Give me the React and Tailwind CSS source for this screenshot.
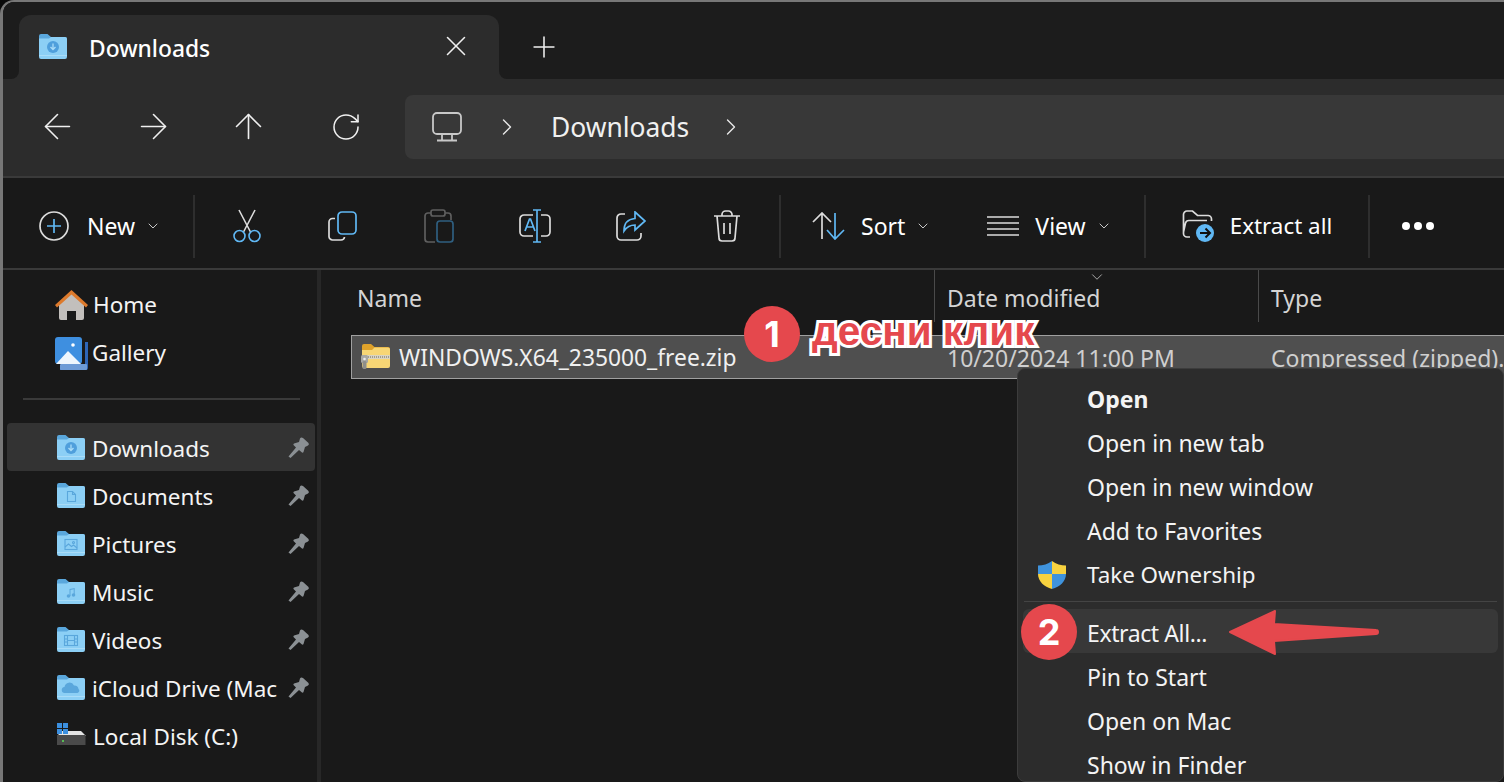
import React from 'react';
import { X, Plus, ArrowLeft, ArrowRight, ArrowUp, RotateCw, ChevronRight, ChevronDown } from 'lucide-react';

const BLUE = '#60b8f4';
const GREY = '#dcdcdc';

const FolderIcon = ({ glyph, className = '' }) => (
  <svg width="28" height="25" viewBox="0 0 28 25" className={`shrink-0 ${className}`}>
    <path d="M0 2a2 2 0 0 1 2-2h6.500l3.500 3h14a2 2 0 0 1 2 2v3H0z" fill="#5aa7dc" />
    <path d="M0 4.500h10l2-1.500h14a2 2 0 0 1 2 2v18a2 2 0 0 1-2 2H2a2 2 0 0 1-2-2z" fill="#8ccff5" />
    <rect x="0" y="21" width="28" height="1" fill="#a9dcf8" />
    {glyph === 'down' && (
      <g>
        <circle cx="14" cy="13" r="6" fill="#4f9fdc" />
        <path d="M14 9.500v6M11.500 13l2.500 2.500 2.500-2.500" stroke="#a9dcf8" strokeWidth="1.300" fill="none" />
      </g>
    )}
    {glyph === 'doc' && (
      <path d="M10.500 8.500h5l3 3v7h-8zM15.500 8.500v3h3" stroke="#5aa7dc" strokeWidth="1.100" fill="none" />
    )}
    {glyph === 'pic' && (
      <g fill="none" stroke="#5aa7dc" strokeWidth="1.100">
        <rect x="8" y="8.500" width="12" height="10" />
        <path d="M8 16l3.500-3 3 2.500 2-1.500 3.500 3" />
        <circle cx="16.500" cy="11.500" r="1" />
      </g>
    )}
    {glyph === 'music' && (
      <g fill="#5aa7dc">
        <circle cx="11.500" cy="17" r="1.800" />
        <circle cx="16.500" cy="16" r="1.800" />
        <path d="M12.500 17V10l5.200-1v7h-1V10.300l-3.200.6V17z" />
      </g>
    )}
    {glyph === 'video' && (
      <g fill="none" stroke="#5aa7dc" strokeWidth="1.100">
        <rect x="7.500" y="8.500" width="13" height="10" />
        <path d="M10.500 8.500v10M17.500 8.500v10M7.500 12h3M7.500 15h3M17.500 12h3M17.500 15h3M10.500 13.500h7" />
      </g>
    )}
    {glyph === 'cloud' && (
      <path d="M8 18a3 3 0 0 1-.5-6 5 5 0 0 1 9.500-1.500A3.800 3.800 0 0 1 21.500 14a2.300 2.300 0 0 1-1 4z" fill="#5aa7dc" />
    )}
  </svg>
);

const PinIcon = () => (
  <svg width="22" height="22" viewBox="0 0 22 22" className="shrink-0">
    <path d="M12 1.500Q13 0 15 1L20.500 6Q21.500 7.500 20 8.500L17 10 15.500 15Q15 16 14 15.500L11 13 2.500 21 .5 19.500 8 10.500 5.500 8Q5 7 6 6.500L11 5z" fill="#8b9094" />
  </svg>
);

const HomeIcon = () => (
  <svg width="33" height="31" viewBox="0 0 33 31" className="shrink-0">
    <path d="M4 14L16.500 3 29 14v14a2 2 0 0 1-2 2h-6v-9h-9v9H6a2 2 0 0 1-2-2z" fill="#c2bfbc" />
    <path d="M0 15L16.500 0 33 15l-2 2.500-14.500-13-14.500 13z" fill="#dd7a2c" />
  </svg>
);

const GalleryIcon = () => (
  <svg width="33" height="33" viewBox="0 0 33 33" className="shrink-0">
    <path d="M5 33h26a2 2 0 0 0 2-2V5h-3v23H5z" fill="#2e66b8" />
    <rect x="5" y="27" width="27" height="6" rx="1" fill="#6d9bd6" />
    <rect x="0" y="0" width="27" height="27" rx="3" fill="#3e8fe0" />
    <path d="M1 27l12-13 13 13z" fill="#eef6fd" />
    <circle cx="18" cy="8" r="1.800" fill="#ffffff" />
  </svg>
);

const DiskIcon = () => (
  <svg width="30" height="24" viewBox="0 0 30 24" className="shrink-0">
    <path d="M5 8h19l5 5H0z" fill="#e4e4e4" />
    <rect x="0" y="12" width="28.500" height="10" fill="#4a4a4a" />
    <circle cx="6" cy="18" r="1" fill="#5ee05a" />
    <g fill="#3b8fdf">
      <rect x="0" y="0" width="5" height="5" />
      <rect x="6" y="0" width="5" height="5" />
      <rect x="0" y="6" width="5" height="5" />
      <rect x="6" y="6" width="5" height="5" />
    </g>
  </svg>
);

const ZipIcon = () => (
  <svg width="30" height="26" viewBox="0 0 30 26" className="shrink-0">
    <path d="M1 2a2 2 0 0 1 2-2h7l3.500 3H27a2 2 0 0 1 2 2v5H1z" fill="#dfa22a" />
    <path d="M1 6h10l2.500-2.500H27a2 2 0 0 1 2 2V22a2 2 0 0 1-2 2H3a2 2 0 0 1-2-2z" fill="#f7d675" />
    <rect x="6" y="11" width="23" height="4" fill="#d9d4c2" />
    <path d="M7 13h22" stroke="#8e8a7c" strokeWidth="1.500" strokeDasharray="1 1" />
    <rect x="0" y="11" width="7" height="8" rx="1.500" fill="#a8a8a4" />
    <rect x="1.500" y="17" width="4" height="8" rx="1.500" fill="#8f8f8b" />
    <circle cx="3.500" cy="15" r="1.300" fill="#ececec" />
  </svg>
);

const ShieldIcon = () => (
  <svg width="30" height="30" viewBox="0 0 30 30" className="shrink-0">
    <path d="M15 1C11 4 6 5.500 1 5.500V14h14z" fill="#3f93dd" />
    <path d="M15 1c4 3 9 4.500 14 4.500V14H15z" fill="#f8d23f" />
    <path d="M1 14c0 7 6 13 14 15V14z" fill="#f8d23f" />
    <path d="M29 14c0 7-6 13-14 15V14z" fill="#3f93dd" />
  </svg>
);

const CutIcon = () => (
  <svg width="30" height="34" viewBox="0 0 30 34" fill="none" strokeWidth="1.600">
    <path d="M7 1l11.500 22M23 1L11.500 23" stroke={GREY} />
    <circle cx="7.500" cy="27" r="5.500" stroke={BLUE} />
    <circle cx="22.500" cy="27" r="5.500" stroke={BLUE} />
  </svg>
);

const CopyIcon = () => (
  <svg width="30" height="30" viewBox="0 0 30 30" fill="none" strokeWidth="1.700">
    <path d="M7 7.500H4.500A3.500 3.500 0 0 0 1 11v14.500A3.500 3.500 0 0 0 4.500 29H13a3.500 3.500 0 0 0 3.500-3" stroke={GREY} />
    <rect x="10" y="1" width="18" height="22" rx="4" stroke={BLUE} />
  </svg>
);

const PasteIcon = () => (
  <svg width="30" height="34" viewBox="0 0 30 34" fill="none" strokeWidth="1.700">
    <path d="M7 4H4a3 3 0 0 0-3 3v23a3 3 0 0 0 3 3h7M21 4h3a3 3 0 0 1 3 3v4" stroke="#5f5f5f" />
    <rect x="7" y="1" width="14" height="6" rx="2" stroke="#5f5f5f" />
    <rect x="13" y="12" width="16" height="21" rx="3" stroke="#2f5f80" />
  </svg>
);

const RenameIcon = () => (
  <svg width="32" height="34" viewBox="0 0 32 34" fill="none" strokeWidth="1.700">
    <path d="M14 6H5a4 4 0 0 0-4 4v13a4 4 0 0 0 4 4h9M22 6h5a4 4 0 0 1 4 4v13a4 4 0 0 1-4 4h-5" stroke={GREY} />
    <path d="M18 1v32M14 1h8M14 33h8M6 22l4.500-12h1L16 22M7.500 18h7" stroke={BLUE} />
  </svg>
);

const ShareIcon = () => (
  <svg width="30" height="30" viewBox="0 0 30 30" fill="none" strokeWidth="1.700">
    <path d="M9 3H5a4 4 0 0 0-4 4v18a4 4 0 0 0 4 4h16a4 4 0 0 0 4-4v-3" stroke={GREY} />
    <path d="M19 1l10 9-10 9v-5c-5 0-8 1.500-11 6 0-8 4-12 11-12.500z" stroke={BLUE} />
  </svg>
);

const TrashIcon = () => (
  <svg width="28" height="32" viewBox="0 0 28 32" fill="none" stroke={GREY} strokeWidth="1.700">
    <path d="M1 6h26M9 6V4.500A3.500 3.500 0 0 1 12.500 1h3A3.500 3.500 0 0 1 19 4.500V6M4 6l2 22a3 3 0 0 0 3 3h10a3 3 0 0 0 3-3l2-22M11 13v11M17 13v11" />
  </svg>
);

const SortIcon = () => (
  <svg width="34" height="28" viewBox="0 0 34 28" fill="none" strokeWidth="1.700">
    <path d="M10 27V1M1 10l9-9 9 9" stroke={GREY} />
    <path d="M23 1v26M15 18l8 9 9-9" stroke={BLUE} />
  </svg>
);

const ViewIcon = () => (
  <svg width="32" height="22" viewBox="0 0 32 22" stroke={GREY} strokeWidth="1.700">
    <path d="M0 2h32M0 8h32M0 14h32M0 20h32" />
  </svg>
);

const ExtractIcon = () => (
  <svg width="32" height="32" viewBox="0 0 32 32" fill="none" className="shrink-0">
    <path d="M8 27H5a3.500 3.500 0 0 1-3.500-3.500V4.500A3.500 3.500 0 0 1 5 1h5.500l5 4.500H26a3.500 3.500 0 0 1 3.500 3.500v2M1.500 22L3.500 13a3.500 3.500 0 0 1 3.500-2.500h18" stroke={GREY} strokeWidth="1.700" />
    <circle cx="23" cy="23" r="9" fill={BLUE} />
    <path d="M18 23h9.500M23.500 18.500l4.500 4.500-4.500 4.500" stroke="#101010" strokeWidth="2" />
  </svg>
);

const NewIcon = () => (
  <svg width="30" height="30" viewBox="0 0 30 30" fill="none" strokeWidth="1.700">
    <circle cx="15" cy="15" r="14" stroke={GREY} />
    <path d="M15 8v14M8 15h14" stroke={BLUE} />
  </svg>
);

const MonitorIcon = () => (
  <svg width="30" height="30" viewBox="0 0 30 30" fill="none" stroke="#c8c8c8" strokeWidth="1.800" className="shrink-0">
    <rect x="1" y="1" width="28" height="21" rx="4" />
    <path d="M10 22v6M20 22v6M5 28.500h20" />
  </svg>
);

const Sep = ({ className = '' }) => <div className={`w-[2px] h-[63px] bg-[#2e2e2e] shrink-0 ${className}`} />;

const ToolSlot = ({ children }) => <div className="w-[96px] flex items-center justify-center shrink-0">{children}</div>;

const NavSlot = ({ children }) => <div className="w-[41px] h-[41px] flex items-center justify-center shrink-0">{children}</div>;

const Chevron = ({ className = '' }) => <ChevronDown size={16} strokeWidth={1.500} className={`text-[#c8c8c8] shrink-0 ${className}`} />;

const sideItems = [
  { name: 'Downloads', glyph: 'down', active: true },
  { name: 'Documents', glyph: 'doc' },
  { name: 'Pictures', glyph: 'pic' },
  { name: 'Music', glyph: 'music' },
  { name: 'Videos', glyph: 'video' },
  { name: 'iCloud Drive (Mac', glyph: 'cloud' },
];

const menuTop = ['Open in new tab', 'Open in new window', 'Add to Favorites'];
const menuBottom = ['Pin to Start', 'Open on Mac', 'Show in Finder'];

const App = () => {
  return (
    <div className="relative w-[1504px] h-[782px] overflow-hidden bg-[#0a0a0a] text-white text-[23px] leading-[32px] font-['Noto_Sans','Open_Sans',sans-serif]">
      <div className="w-full h-full flex flex-col bg-[#1c1c1c] border-l-[3px] border-t-[2px] border-[#777777] rounded-tl-[14px] overflow-hidden">
        {/* tabs */}
        <div className="h-[77px] flex shrink-0 bg-[#2c2c2c]">
          <div className="w-[16px] h-full bg-[#1c1c1c] rounded-br-[8px]" />
          <div className="w-[480px] h-full bg-[#1c1c1c] pt-[13px]">
            <div className="h-full bg-[#2c2c2c] rounded-t-[12px] flex items-center pl-[20px] pb-[1px]">
              <FolderIcon glyph="down" />
              <span className="ml-[22px] text-[22.800px] font-medium pt-[4px]">Downloads</span>
              <X size={34} strokeWidth={1.100} className="ml-[229px] -mt-[2px] text-[#efefef]" />
            </div>
          </div>
          <div className="flex-1 h-full bg-[#1c1c1c] rounded-bl-[8px] pt-[13px] pl-[28px] flex items-center">
            <Plus size={34} strokeWidth={1.100} className="text-[#efefef]" />
          </div>
        </div>

        {/* nav */}
        <div className="h-[97px] bg-[#2c2c2c] shrink-0 flex items-center pl-[34px] pb-[2px] text-[#f0f0f0]">
          <NavSlot><ArrowLeft size={41} strokeWidth={0.950} /></NavSlot>
          <div className="ml-[55px]"><NavSlot><ArrowRight size={41} strokeWidth={0.950} /></NavSlot></div>
          <div className="ml-[54px]"><NavSlot><ArrowUp size={41} strokeWidth={0.950} /></NavSlot></div>
          <div className="ml-[56px]"><NavSlot><RotateCw size={32} strokeWidth={1.150} /></NavSlot></div>
          <div className="ml-[39px] flex-1 h-[64px] bg-[#383838] rounded-l-[8px] flex items-center pl-[27px]">
            <MonitorIcon />
            <ChevronRight size={28} strokeWidth={1.200} className="ml-[31px] text-[#e8e8e8]" />
            <span className="ml-[30px] text-[26.400px] pt-[1px]">Downloads</span>
            <ChevronRight size={28} strokeWidth={1.200} className="ml-[28px] text-[#e8e8e8]" />
          </div>
        </div>

        {/* toolbar */}
        <div className="h-[94px] bg-[#191919] border-t-[2px] border-b-[2px] border-[#3a3a3a] shrink-0 flex items-center pt-[6px]">
          <div className="w-[190px] flex items-center pl-[36px] shrink-0">
            <NewIcon />
            <span className="ml-[18px]">New</span>
            <Chevron className="ml-[10px]" />
          </div>
          <Sep />
          <div className="flex ml-[4px]">
            <ToolSlot><CutIcon /></ToolSlot>
            <ToolSlot><CopyIcon /></ToolSlot>
            <ToolSlot><PasteIcon /></ToolSlot>
            <ToolSlot><RenameIcon /></ToolSlot>
            <ToolSlot><ShareIcon /></ToolSlot>
            <ToolSlot><TrashIcon /></ToolSlot>
          </div>
          <Sep className="ml-[4px]" />
          <div className="flex items-center ml-[31px]">
            <SortIcon />
            <span className="ml-[15px]">Sort</span>
            <Chevron className="ml-[10px]" />
          </div>
          <div className="flex items-center ml-[56px]">
            <ViewIcon />
            <span className="ml-[16px]">View</span>
            <Chevron className="ml-[10px]" />
          </div>
          <Sep className="ml-[32px]" />
          <div className="flex items-center ml-[36px]">
            <ExtractIcon />
            <span className="ml-[16px] text-[22.400px]">Extract all</span>
          </div>
          <Sep className="ml-[36px]" />
          <div className="flex items-center gap-[4px] ml-[32px]">
            <span className="w-[8px] h-[8px] rounded-full bg-white" />
            <span className="w-[8px] h-[8px] rounded-full bg-white" />
            <span className="w-[8px] h-[8px] rounded-full bg-white" />
          </div>
        </div>

        {/* body */}
        <div className="flex-1 flex min-h-0 text-[22.500px]">
          <aside className="w-[314px] shrink-0 bg-[#191919] border-r-[4px] border-[#272727] box-content pt-[11px]">
            <div className="h-[48px] flex items-center pl-[52px]">
              <HomeIcon />
              <span className="ml-[5px] text-[#f4f4f4]">Home</span>
            </div>
            <div className="h-[48px] flex items-center pl-[52px]">
              <GalleryIcon />
              <span className="ml-[4px] text-[#f4f4f4]">Gallery</span>
            </div>
            <div className="h-[46px] flex items-center pl-[20px] pr-[17px] pb-[2px]">
              <div className="w-full h-[2px] bg-[#3a3a3a]" />
            </div>
            {sideItems.map((item) => (
              <div
                key={item.name}
                className={`h-[48px] ml-[4px] mr-[2px] rounded-[4px] flex items-center pl-[50px] pr-[5px] pt-[1px] ${item.active ? 'bg-[#333333]' : ''}`}
              >
                <FolderIcon glyph={item.glyph} />
                <span className="ml-[7px] flex-1 whitespace-nowrap overflow-hidden text-[#f4f4f4] pt-[3px]">{item.name}</span>
                <PinIcon />
              </div>
            ))}
            <div className="h-[48px] flex items-center pl-[54px]">
              <DiskIcon />
              <span className="ml-[6px] text-[#f4f4f4] pt-[4px]">Local Disk (C:)</span>
            </div>
          </aside>

          <main className="flex-1 bg-[#191919] min-w-0 text-[23px]">
            <div className="h-[52px] flex text-[#d4d4d4] relative">
              <div className="w-[614px] flex items-center pl-[36px] border-r border-[#4a4a4a] pt-[4px]">Name</div>
              <div className="w-[324px] flex items-center pl-[12px] border-r border-[#4a4a4a] pt-[4px]">Date modified</div>
              <div className="flex items-center pl-[12px] pt-[4px]">Type</div>
              <ChevronDown size={18} strokeWidth={1.200} className="absolute left-[767px] -top-[2px] text-[#b8b8b8]" />
            </div>
            <div className="mt-[13px] ml-[30px] h-[44px] bg-[#4f4f4f] border border-[#a0a0a0] border-r-0 flex items-center whitespace-nowrap overflow-hidden">
              <div className="pl-[9px] flex items-center w-[595px] shrink-0">
                <ZipIcon />
                <span className="ml-[8px] text-[#f0f0f0] text-[22.800px] pt-[2px]">WINDOWS.X64_235000_free.zip</span>
              </div>
              <span className="w-[324px] shrink-0 text-[#cfcfcf] pt-[2px]">10/20/2024 11:00 PM</span>
              <span className="shrink-0 text-[#cfcfcf] pt-[2px]">Compressed (zipped)...</span>
            </div>
          </main>
        </div>
      </div>

      {/* context menu */}
      <div className="absolute left-[1017px] top-[368px] w-[487px] h-[414px] bg-[#2c2c2c] border border-[#3c3c3c] rounded-[8px] pt-[8px] text-[#f4f4f4] overflow-hidden">
        <div className="h-[44px] pl-[69px] flex items-center font-bold">Open</div>
        {menuTop.map((label) => (
          <div key={label} className="h-[44px] pl-[69px] flex items-center">{label}</div>
        ))}
        <div className="h-[44px] pl-[19px] flex items-center">
          <ShieldIcon />
          <span className="ml-[20px] text-[22.400px]">Take Ownership</span>
        </div>
        <div className="h-[5px] mx-[6px] border-b border-[#444444]" />
        <div className="h-[44px] mt-[7px] mx-[5px] pl-[64px] pt-[4px] rounded-[6px] bg-[#383838] flex items-center tracking-[-0.4px]">Extract All...</div>
        <div className="mt-[2px]">
          {menuBottom.map((label) => (
            <div key={label} className="h-[44px] pl-[69px] flex items-center">{label}</div>
          ))}
        </div>
      </div>

      {/* annotations */}
      <div className="absolute left-[744px] top-[306px] w-[56px] h-[56px] rounded-full bg-[#e5484d] flex items-center justify-center font-['Inter',sans-serif] font-bold text-[36px] text-white">1</div>
      <div className="absolute left-[812px] top-[309px] font-['Liberation_Sans',sans-serif] font-bold text-[40.500px] leading-[44px] whitespace-nowrap text-[#e5484d] [-webkit-text-stroke:6px_white] [paint-order:stroke_fill]">десни клик</div>
      <div className="absolute left-[1021px] top-[604px] w-[56px] h-[56px] rounded-full bg-[#e5484d] flex items-center justify-center font-['Inter',sans-serif] font-bold text-[36px] text-white">2</div>
      <svg className="absolute left-[1225px] top-[606px]" width="158" height="52" viewBox="0 0 158 52">
        <path d="M5 26L50 5 49 18 151 24a2 2 0 0 1 0 4L49 35 50 48z" fill="#e5484d" stroke="#e5484d" strokeWidth="2" strokeLinejoin="round" />
      </svg>
    </div>
  );
};

export default App;
